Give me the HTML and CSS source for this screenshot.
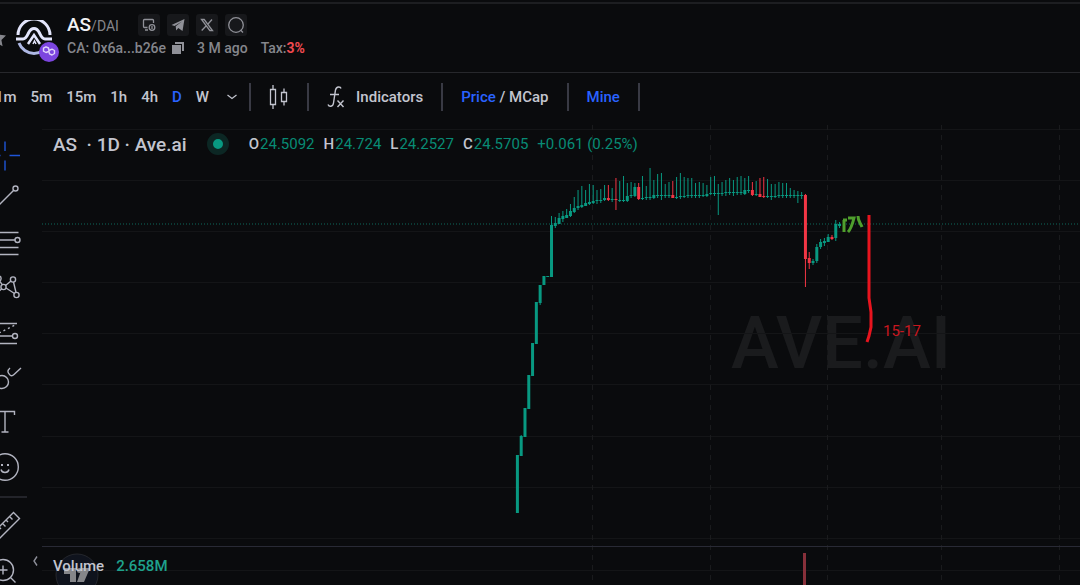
FILE: index.html
```html
<!doctype html>
<html lang="en">
  <head>
    <meta charset="UTF-8" />
    <meta name="viewport" content="width=device-width, initial-scale=1.0" />
    <title>AS/DAI - Ave.ai</title>
    <link rel="stylesheet" href="styles.css">
  </head>
  <body>
    <header class="token-header">
      <button class="favorite" aria-label="Favorite">
        <svg width="18" height="18" viewBox="0 0 18 18"><path d="M9 0l2.700 5.800 6.300.8-4.600 4.400 1.200 6.300L9 14.200l-5.600 3.100L4.600 11 0 6.600l6.300-.8z" fill="#85868c"/></svg>
      </button>
      <div class="token-logo">
        <svg width="36" height="36" viewBox="0 0 36 36" fill="none">
          <g stroke="#e3e5fb" stroke-width="3">
            <path d="M2 15A16 16 0 0 1 34 15"/>
            <path d="M3 23A16 16 0 0 0 33 23" stroke="#aeb8e4"/>
            <path d="M0 19h7c3 0 4-3 5.500-6 3-6 8-6 11 0 1.500 3 2.500 6 5.500 6h7"/>
            <path d="M12 24l6-9 6 9" stroke-width="2.500"/>
            <path d="M17 24l1.500-3 1.500 3" stroke-width="1.500"/>
          </g>
        </svg>
        <svg class="chain-badge" width="20" height="20" viewBox="0 0 20 20" fill="none">
          <circle cx="10" cy="10" r="10" fill="#7c45df"/>
          <path d="M10 8.500L9.500 6 7 4.800 4.500 6.200v3L7 10.500l2.500-1 1.500-1.500 2-.8 2.500 1.300v3L13 13l-2.500-1.200L10 9.500" stroke="#e0d2fb" stroke-width="1.400" stroke-linejoin="round"/>
        </svg>
      </div>
      <div class="token-info">
        <div class="token-row">
          <h1 class="pair">AS<span>/DAI</span></h1>
          <nav class="links">
            <a href="#" aria-label="Website"><svg width="16" height="16" viewBox="0 0 16 16" fill="none" stroke="currentColor" stroke-width="1.300"><path d="M6.500 10.500h-3a1 1 0 0 1-1-1v-6a1 1 0 0 1 1-1h8a1 1 0 0 1 1 1V6M4 13h3"/><circle cx="11" cy="10.500" r="2.800"/><path d="M11 9v3"/></svg></a>
            <a href="#" aria-label="Telegram"><svg width="16" height="16" viewBox="0 0 16 16"><path d="M1.500 8L14.500 2l-2 12-4.200-3-2.100 2.500-.5-4.200L12 4.500 4.500 9z" fill="currentColor"/></svg></a>
            <a href="#" aria-label="X"><svg width="14" height="14" viewBox="0 0 14 14" fill="none" stroke="currentColor" stroke-width="1.300"><path d="M1.500 1.500h2.700l8.300 11H9.800zM12 1.500L7.800 6.200M6 8l-4.300 4.500"/></svg></a>
            <a href="#" aria-label="Search"><svg width="18" height="18" viewBox="0 0 18 18" fill="none" stroke="currentColor" stroke-width="1.300"><circle cx="9" cy="9" r="7.300"/><path d="M13.500 14l2.500 2.500"/></svg></a>
          </nav>
        </div>
        <div class="token-row token-meta">
          <span class="address">CA: 0x6a...b26e
            <button aria-label="Copy address"><svg width="12" height="12" viewBox="0 0 12 12"><path d="M0 3h9v9H0zM3 0h9v9h-2V2H3z" fill="#909198"/></svg></button>
          </span>
          <span>3 M ago</span>
          <span>Tax:<strong>3%</strong></span>
        </div>
      </div>
    </header>

    <div class="toolbar">
      <div class="intervals">
        <button>1m</button>
        <button>5m</button>
        <button>15m</button>
        <button>1h</button>
        <button>4h</button>
        <button class="active">D</button>
        <button>W</button>
        <button class="more" aria-label="More intervals"><svg width="10" height="6" viewBox="0 0 10 6" fill="none" stroke="currentColor" stroke-width="1.200"><path d="M.5 1L5 4.500 9.500 1"/></svg></button>
      </div>
      <div class="group">
        <button aria-label="Chart style"><svg width="20" height="26" viewBox="0 0 20 26" fill="none" stroke="currentColor" stroke-width="1.300"><path d="M1.500 5.500h5v15h-5zM4 1v4.500M4 20.500V25M12.500 8.500h5v9h-5zM15 4.500v4M15 17.500v4"/></svg></button>
      </div>
      <div class="group">
        <button class="indicators">
          <svg width="18" height="24" viewBox="0 0 18 24" fill="none" stroke="currentColor" stroke-width="1.400"><path d="M14 3.500C13.500 1.500 9.500 1 8.500 5L6.500 18c-.5 4-4.500 4-5.500 1.500M3 9.500h9M10.500 15.500l6 6.500M16.500 15.500l-6 6.500"/></svg>
          Indicators
        </button>
      </div>
      <div class="group">
        <button><span><span class="active">Price</span> / MCap</span></button>
      </div>
      <div class="group">
        <button class="active">Mine</button>
      </div>
    </div>

    <main class="workspace">
      <aside class="tools">
        <button class="selected" aria-label="Cross"><svg viewBox="0 0 32 32"><path d="M20.500 17.500H31M1 17.500h10.500M16 3.500V13M16 22.500v10"/></svg></button>
        <button aria-label="Trend line"><svg viewBox="0 0 32 32"><circle cx="26.500" cy="5.500" r="2.500"/><circle cx="4.500" cy="27.500" r="2.500"/><path d="M24.500 7.500L6.500 25.500"/></svg></button>
        <button aria-label="Fib retracement"><svg viewBox="0 0 32 32"><path d="M3 4.500h26.500M3 12h23M3 19.500h26.500M3 26.500h26.500"/><circle cx="28.500" cy="12" r="2.500"/></svg></button>
        <button aria-label="Patterns"><svg viewBox="0 0 32 32"><circle cx="24" cy="6.500" r="2.600"/><circle cx="27.500" cy="22" r="2.600"/><circle cx="14.500" cy="14" r="2.600"/><circle cx="9.500" cy="5.500" r="2.600"/><circle cx="5" cy="22.500" r="2.600"/><path d="M16.500 12.500L22 8M17 15l8.500 5.500M24.500 9L27 19.500M10.500 8l3 4M9 8L5.500 20M7 21l6-5.500"/></svg></button>
        <button aria-label="Forecasting"><svg viewBox="0 0 32 32"><path d="M3 5.500h25M3 18h20.500M3 25.500h25"/><circle cx="26" cy="18" r="2.500"/><path d="M10 15L27 6.500" stroke-dasharray="2 3"/></svg></button>
        <button aria-label="Brush"><svg viewBox="0 0 32 32"><circle cx="13" cy="19" r="6.500"/><path d="M21 5c-3.500 3-2 5 0 7 1.500 1.300 3 .5 4-.5L32 5"/></svg></button>
        <button aria-label="Text"><svg viewBox="0 0 32 32"><path d="M6.500 7V3.500h19V7M16 3.500V24M12.500 24h7"/></svg></button>
        <button aria-label="Emoji"><svg viewBox="0 0 32 32"><circle cx="16" cy="14" r="13.300"/><path d="M12 16.500c1 4 7 4 8 0"/><path d="M12 12h2M18 12h2" stroke-width="2"/></svg></button>
        <hr />
        <button aria-label="Measure"><svg viewBox="0 0 32 32"><path d="M24.500 2.500l6 6L8 31l-6-6zM20.500 6.500l3 3M17 10l2 2M13.500 13.500l3 3M10 17l2 2"/></svg></button>
        <button aria-label="Zoom in"><svg viewBox="0 0 32 32"><circle cx="14" cy="15" r="10.500"/><path d="M21.500 22.500l5 5M9.500 15h9M14 10.500v9"/></svg></button>
      </aside>

      <section class="chart">
        <svg class="canvas" aria-hidden="true">
          <text class="watermark" x="799" y="248" text-anchor="middle">AVE.AI</text>
          <g id="grid"></g>
          <line class="price-line" x1="0" x2="100%" y1="104" y2="104"/>
          <g id="candles"></g>
          <rect class="volume-bar" x="761" y="433" width="3" height="100%"/>
          <g fill="none" stroke-width="3">
            <path d="M802 112V100M801 100h4M806 98h6c-1 4-3 11-6 14M816 96c0 5 2 6 4 11" stroke="#4f9f2d"/>
            <path d="M827 95v83l2 14v15l-2 9-2 6" stroke="#e8141e"/>
          </g>
          <text class="note" x="841" y="216">15-17</text>
        </svg>

        <div class="price-pane">
          <div class="legend">
            <h2>AS&nbsp; · 1D · Ave.ai</h2>
            <span class="status"></span>
            <dl class="ohlc">
              <div><dt>O</dt><dd>24.5092</dd></div>
              <div><dt>H</dt><dd>24.724</dd></div>
              <div><dt>L</dt><dd>24.2527</dd></div>
              <div><dt>C</dt><dd>24.5705</dd></div>
              <div><dd>+0.061 (0.25%)</dd></div>
            </dl>
          </div>
        </div>
        <div class="volume-pane">
          <svg class="tv-logo" width="44" height="44" viewBox="0 0 44 44"><circle cx="22" cy="22" r="21" fill="#0f131d" stroke="#24262c"/><path d="M9 15h12v14h-6v-8H9zM27 15h8l-6 14h-7z" fill="#85868a"/><circle cx="24.500" cy="17.500" r="2.500" fill="#85868a"/></svg>
          <button class="collapse" aria-label="Collapse"><svg width="6" height="10" viewBox="0 0 6 10" fill="none" stroke="#8d8f99" stroke-width="1.400"><path d="M5 .5L2 5l3 4.500"/></svg></button>
          <div class="volume-legend"><span>Volume</span> <strong>2.658M</strong></div>
        </div>
      </section>
    </main>

    <script src="chart.js"></script>
  </body>
</html>
```
FILE: styles.css
```css
* {
  box-sizing: border-box;
}

body {
  margin: 0;
  height: 100vh;
  display: flex;
  flex-direction: column;
  overflow: hidden;
  background: #0a0b0d;
  color: #c3c5cf;
  font-family: Roboto, 'Liberation Sans', sans-serif;
  font-size: 15px;
}

button {
  display: flex;
  align-items: center;
  padding: 0;
  border: 0;
  background: none;
  color: inherit;
  font: inherit;
  cursor: pointer;
}

svg {
  display: block;
}

/* token header */
.token-header {
  display: flex;
  align-items: center;
  height: 71px;
  margin-top: 2px;
  border-top: 2px solid #1d1e21;
  border-bottom: 1px solid #27282c;
}

.favorite {
  margin-left: -12px;
  margin-right: 10px;
}

.token-logo {
  position: relative;
  margin-right: 15px;
}

.chain-badge {
  position: absolute;
  right: -7px;
  bottom: -6px;
}

.token-info {
  padding-bottom: 4px;
}

.token-row {
  display: flex;
  align-items: center;
  height: 23px;
}

.pair {
  margin: 0 19px 0 0;
  color: #f1f1f3;
  font-size: 19px;
  font-weight: 500;
}

.pair span {
  color: #85868c;
  font-size: 14px;
  font-weight: 400;
}

.links {
  display: flex;
  gap: 7px;
}

.links a {
  display: flex;
  align-items: center;
  justify-content: center;
  width: 22px;
  height: 22px;
  border-radius: 3px;
  background: #17181b;
  color: #909198;
}

.token-meta {
  gap: 13px;
  color: #85868c;
  font-size: 14px;
  font-weight: 500;
}

.address {
  display: flex;
  align-items: center;
  gap: 6px;
}

.token-meta strong {
  color: #ef4a50;
  font-weight: 700;
}

/* toolbar */
.toolbar {
  display: flex;
  align-items: center;
  height: 47px;
  font-weight: 500;
}

.intervals,
.group {
  display: flex;
  align-items: center;
  height: 28px;
  border-right: 2px solid #393a44;
}

.intervals {
  gap: 14px;
  margin-left: -5px;
  padding-right: 12px;
}

.more {
  padding-left: 4px;
}

.group {
  padding: 0 18px;
}

.indicators {
  gap: 11px;
}

.active {
  color: #2962ff;
}

/* drawing tools */
.workspace {
  display: flex;
  flex: 1;
  min-height: 0;
}

.tools {
  width: 42px;
  padding-top: 11px;
}

.tools button {
  height: 45px;
  margin-left: -11px;
}

.tools svg {
  width: 32px;
  height: 32px;
  overflow: visible;
  fill: none;
  stroke: #b2b4c0;
  stroke-width: 1.4;
}

.tools .selected svg {
  stroke: #1f55d8;
}

.tools hr {
  width: 27px;
  margin: 5px 0;
  border: 0;
  border-top: 2px solid #23242a;
}

/* chart */
.chart {
  position: relative;
  display: flex;
  flex: 1;
  flex-direction: column;
}

.canvas {
  position: absolute;
  width: 100%;
  height: 100%;
}

.price-pane,
.volume-pane {
  position: relative;
}

.price-pane {
  flex: 1;
  padding: 12px 11px;
}

.legend {
  display: flex;
  align-items: center;
  height: 24px;
}

.legend h2 {
  margin: 0 20px 0 0;
  font-size: 19px;
  font-weight: 500;
}

.status {
  width: 22px;
  height: 22px;
  margin-right: 20px;
  border: 6px solid #0c2724;
  border-radius: 50%;
  background: #089981;
}

.ohlc {
  display: flex;
  gap: 9px;
  margin: 0;
}

.ohlc div {
  display: flex;
}

.ohlc dt {
  margin-right: 1px;
  font-weight: 500;
}

.ohlc dd {
  margin: 0;
  color: #088b75;
}

.volume-pane {
  height: 39px;
  border-top: 1px solid #292a35;
}

.tv-logo {
  position: absolute;
  top: 6px;
  left: 13px;
}

.collapse {
  position: absolute;
  top: 9px;
  left: -10px;
}

.volume-legend {
  position: relative;
  display: flex;
  gap: 12px;
  padding: 9px 11px;
  line-height: 20px;
}

.volume-legend span,
.volume-legend strong {
  font-weight: 500;
}

.volume-legend strong {
  color: #1fa28c;
}

.grid-line {
  stroke: #141517;
}

.grid-line.dashed {
  stroke: #1a1b1d;
  stroke-dasharray: 5 5;
}

.price-line {
  stroke: #0d6b5c;
  stroke-width: 1;
  stroke-dasharray: 1 2;
}

.watermark {
  fill: #1a1b1d;
  font-size: 72px;
  font-weight: 500;
}

.note {
  fill: #c9171f;
  font-size: 15px;
}

.volume-bar {
  fill: #87303a;
}

.up {
  fill: #089981;
}

.down {
  fill: #f23645;
}
```
FILE: chart.js
```js
// high, body top, body bottom, low, 1 = down candle
const candles = [
  [335, 335, 393, 393], [315, 316, 336, 336], [288, 288, 317, 317], [255, 255, 289, 289],
  [223, 223, 256, 256], [182, 182, 224, 224], [165, 165, 183, 185], [156, 156, 165, 165],
  [156, 156, 157, 157], [96, 105, 157, 157], [97, 103, 106, 108], [93, 98, 104, 104],
  [91, 96, 99, 102], [89, 95, 98, 98], [84, 91, 96, 97], [77, 88, 92, 93],
  [70, 86, 88, 90], [66, 85, 87, 88], [70, 83, 86, 86], [64, 82, 84, 85],
  [65, 81, 83, 84], [70, 80, 81, 84], [69, 80, 81, 83], [65, 78, 80, 81],
  [65, 78, 80, 81, 1], [68, 79, 80, 82], [58, 79, 80, 90, 1], [61, 80, 81, 82],
  [56, 80, 81, 82], [63, 76, 81, 82], [62, 75, 76, 78], [63, 67, 76, 77],
  [63, 67, 79, 80, 1], [56, 78, 79, 80], [66, 77, 78, 80], [48, 77, 78, 80],
  [60, 75, 78, 79], [54, 75, 76, 78], [53, 75, 76, 80], [64, 75, 76, 78],
  [62, 75, 76, 78], [61, 75, 78, 78, 1], [57, 77, 78, 79], [53, 76, 77, 79],
  [57, 76, 77, 78], [58, 75, 76, 78], [58, 75, 76, 78], [63, 75, 76, 78],
  [62, 75, 76, 78], [63, 75, 76, 77], [65, 74, 76, 77], [57, 73, 74, 75],
  [56, 73, 74, 76], [64, 73, 74, 95], [62, 73, 74, 76], [60, 72, 73, 76],
  [58, 72, 73, 75], [60, 72, 73, 76], [57, 72, 73, 75], [56, 72, 73, 75],
  [58, 70, 74, 75], [56, 70, 71, 73], [62, 70, 75, 76, 1], [61, 74, 75, 76],
  [58, 74, 77, 77, 1], [57, 76, 77, 78, 1], [59, 76, 77, 78], [64, 76, 77, 80],
  [64, 76, 77, 78], [62, 75, 76, 78], [63, 75, 76, 78], [63, 75, 76, 78],
  [68, 75, 76, 78], [70, 75, 76, 78], [71, 75, 76, 83], [72, 75, 76, 79],
  [74, 75, 139, 167, 1], [132, 138, 143, 149, 1], [139, 141, 143, 145], [124, 127, 141, 143],
  [119, 122, 127, 129], [118, 121, 123, 126], [114, 117, 122, 122], [115, 117, 119, 120, 1],
  [100, 104, 118, 121], [102, 104, 106, 108]
];

const firstX = 475.4;
const stepX = 3.79;

function add(parent, name, attrs) {
  const el = document.createElementNS('http://www.w3.org/2000/svg', name);
  for (const key in attrs) el.setAttribute(key, attrs[key]);
  parent.appendChild(el);
}

const grid = document.getElementById('grid');
[9.5, 60.5, 111.5, 162.5, 213.5, 264.5, 316.5, 367.5, 418.5, 450.5].forEach(y => {
  add(grid, 'line', { class: 'grid-line', x1: 0, x2: '100%', y1: y, y2: y });
});
[550.5, 668.5, 785.5, 899.5, 1017.5].forEach(x => {
  add(grid, 'line', { class: 'grid-line dashed', x1: x, x2: x, y1: 5, y2: '100%' });
});

const series = document.getElementById('candles');
candles.forEach(([high, top, bottom, low, down], i) => {
  const x = firstX + i * stepX;
  const cls = down ? 'down' : 'up';
  add(series, 'rect', { class: cls, x: x - 0.5, y: high, width: 1, height: low - high });
  add(series, 'rect', { class: cls, x: x - 1.5, y: top, width: 3, height: bottom - top });
});
```
